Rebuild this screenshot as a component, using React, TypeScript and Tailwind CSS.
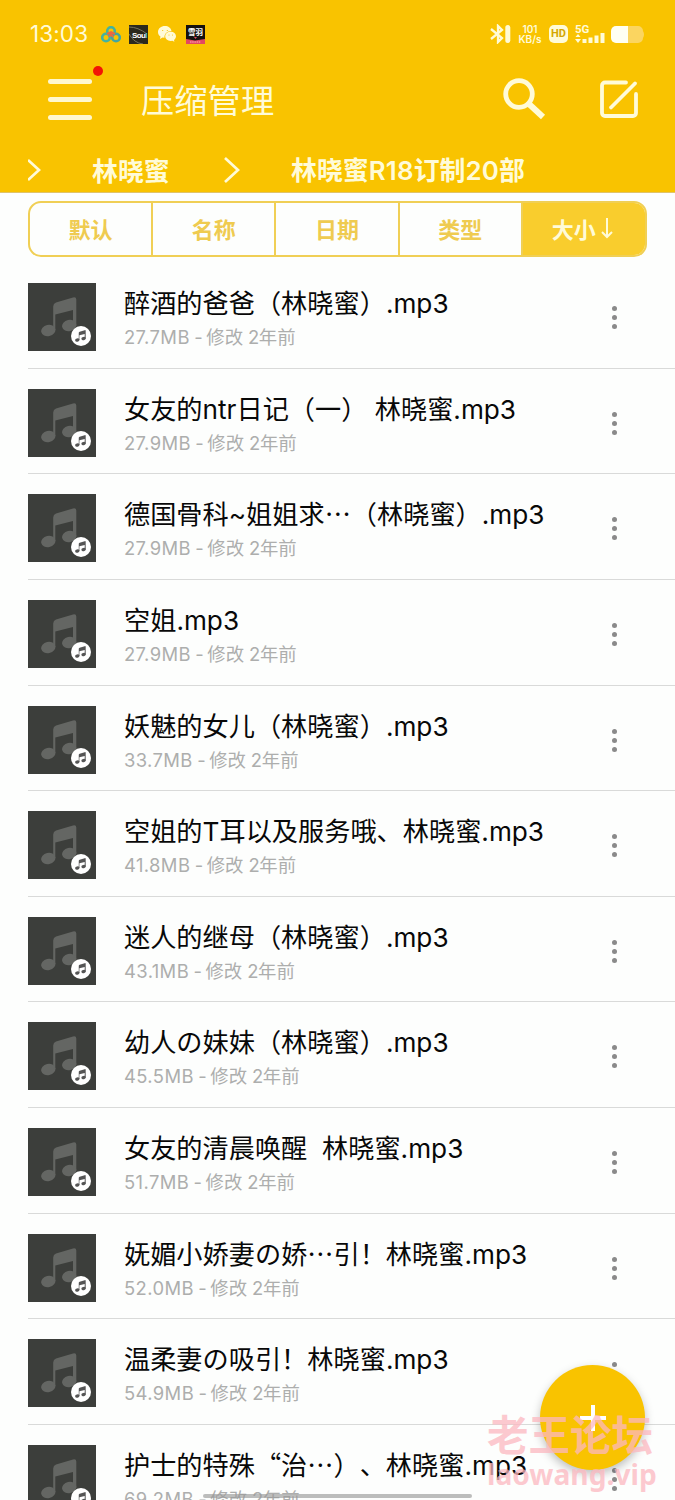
import React from "react";

const CJK = "font-['Noto_Sans_CJK_SC',sans-serif]";
const LATIN = "font-['Inter','Noto_Sans_CJK_SC',sans-serif]";

type Track = { title: string; size: string };

const tracks: Track[] = [
  { title: "醉酒的爸爸（林晓蜜）.mp3", size: "27.7MB" },
  { title: "女友的ntr日记（一） 林晓蜜.mp3", size: "27.9MB" },
  { title: "德国骨科~姐姐求…（林晓蜜）.mp3", size: "27.9MB" },
  { title: "空姐.mp3", size: "27.9MB" },
  { title: "妖魅的女儿（林晓蜜）.mp3", size: "33.7MB" },
  { title: "空姐的T耳以及服务哦、林晓蜜.mp3", size: "41.8MB" },
  { title: "迷人的继母（林晓蜜）.mp3", size: "43.1MB" },
  { title: "幼人の妹妹（林晓蜜）.mp3", size: "45.5MB" },
  { title: "女友的清晨唤醒  林晓蜜.mp3", size: "51.7MB" },
  { title: "妩媚小娇妻の娇…引！林晓蜜.mp3", size: "52.0MB" },
  { title: "温柔妻の吸引！林晓蜜.mp3", size: "54.9MB" },
  { title: "护士的特殊“治…）、林晓蜜.mp3", size: "69.2MB" },
];

const tabs = ["默认", "名称", "日期", "类型"];

function Mixed({ text }: { text: string }) {
  return (
    <>
      {text.split(/([\x20-\x7e]+)/).map((part, i) => (
        <span key={i} className={i % 2 ? LATIN : CJK}>{part}</span>
      ))}
    </>
  );
}

function Note({ className }: { className: string }) {
  return (
    <svg viewBox="0 0 36 40" className={className} fill="currentColor">
      <path d="M12.2 9.5Q12.3 6.5 15 5.500L32 .500Q35.300-.200 35.300 2.500V29H32V13L14.300 17.500V33H12.200Z" />
      <ellipse cx="7.300" cy="33.500" rx="7.200" ry="5.600" transform="rotate(-12 7.300 33.500)" />
      <ellipse cx="28.200" cy="28.500" rx="7.200" ry="5.600" transform="rotate(-12 28.200 28.500)" />
    </svg>
  );
}

function Row({ title, size }: Track) {
  return (
    <li className="flex h-[105.65px] shrink-0 items-start border-b border-[#d9dad9] pt-[20px]">
      <div className="relative size-[68px] shrink-0 bg-[#3c3e3b] text-[#646663]">
        <Note className="absolute left-[13px] top-[14px] h-[40px] w-[36px]" />
        <div className="absolute left-[42.500px] top-[42.500px] flex size-5 items-center justify-center rounded-full bg-white text-[#555]">
          <Note className="h-3 w-[11px]" />
        </div>
      </div>
      <div className="ml-[28px] flex-1 whitespace-pre">
        <div className="h-[42px] text-[26.2px] leading-[39px] text-[#080808] [font-kerning:none] [text-spacing-trim:space-all]"><Mixed text={title} /></div>
        <div className={`${LATIN} -mt-[3px] text-[18.4px] leading-[28px] text-[#adaead]`}>
          <span className="tracking-[0.4px]">{size}</span>
          <span className="tracking-[-0.8px]"> - </span>
          <span className={CJK}>修改</span><span className="tracking-[-0.3px]"> 2</span><span className={CJK}>年前</span>
        </div>
      </div>
      <div className="mr-[58px] mt-[23px] flex flex-col gap-[4px]">
        <i className="size-[5px] rounded-full bg-[#8a8a8a]" />
        <i className="size-[5px] rounded-full bg-[#8a8a8a]" />
        <i className="size-[5px] rounded-full bg-[#8a8a8a]" />
      </div>
    </li>
  );
}

function StatusBar() {
  return (
    <div className="flex h-[68px] items-center pl-[30px] pr-[30px] text-[#fffbd8]">
      <span className={`${LATIN} w-[71px] text-[22.500px] tracking-[0.1px]`}>13:03</span>
      <svg className="h-[17px] w-[20px]" viewBox="0 0 20 17" fill="none" strokeWidth="2.600">
        <circle cx="10" cy="5" r="3.800" stroke="#43b3a0" />
        <circle cx="5" cy="11.500" r="3.800" stroke="#43b3a0" />
        <circle cx="15" cy="11.500" r="3.800" stroke="#43a6a0" />
        <path d="M6 8l4-2 4 2M8 11l2-3 2 3" stroke="#ee6840" strokeWidth="2" />
      </svg>
      <svg className="ml-2 size-[19px]" viewBox="0 0 19 19">
        <rect width="19" height="19" fill="#2b291d" />
        <path d="M0 2Q9 2 18 9M0 9Q5 18 14 19" stroke="#77735c" fill="none" />
        <text x="3" y="12.800" fontSize="8" letterSpacing="-.6" fontWeight="bold" fontFamily="Liberation Sans" fill="#fff">Sou<tspan fill="#4cc">l</tspan></text>
      </svg>
      <svg className="ml-[10px] h-[17px] w-[18px]" viewBox="0 0 18 17" fill="currentColor">
        <path d="M7 0C3 0 0 2.600 0 6c0 2 1 3.500 2.500 4.500L2 13l2.500-1.500 2 .3C6 8 9 5 13.500 5 13 2 10.300 0 7 0Z" />
        <path d="M12.700 5.700c-3.200 0-5.500 2-5.500 4.600s2.300 4.600 5.500 4.600l1.700-.2 2 1.100-.4-1.800c1.200-.9 2-2.200 2-3.700 0-2.600-2.300-4.600-5.300-4.600Z" />
        <g fill="#f6c100"><circle cx="4.700" cy="4.500" r=".6" /><circle cx="9.300" cy="4.500" r=".6" /><circle cx="11" cy="9" r=".5" /><circle cx="14.500" cy="9" r=".5" /></g>
      </svg>
      <svg className="ml-[10px] size-[19px]" viewBox="0 0 19 19">
        <rect width="19" height="19" fill="#15100e" />
        <path d="M0 14l9 1.500 10-1.500v5H0Z" fill="#e34862" />
        <text x="2" y="10" fontSize="7.500" fontWeight="bold" fontFamily="Noto Sans CJK SC" fill="#fff">雪羽</text>
        <path d="M8 12h3l-1.500 2Z" fill="#e34862" /><path d="M4 17h11" stroke="#ffb4bc" strokeDasharray="1.500 .7" />
      </svg>
      <svg className="ml-auto h-[20px] w-[21px]" viewBox="0 0 21 20" fill="none" stroke="currentColor" strokeWidth="2.300">
        <path d="M1 5l11 9-4 4V2l4 4-11 9" /><path d="M17.800 3.500v13" strokeWidth="5" strokeLinecap="round" />
      </svg>
      <div className={`${LATIN} ml-[7px] flex w-[24px] flex-col items-center text-[10px] font-semibold leading-[10px]`}>
        <span>101</span><span>KB/s</span>
      </div>
      <div className="ml-[7px] flex h-[18px] w-[19px] items-center justify-center rounded-[5px] bg-[#fffbd8] font-['Roboto',sans-serif] text-[11px] font-bold text-[#d4a700]">HD</div>
      <svg className="ml-[7px] h-[20px] w-[30px] overflow-visible" viewBox="0 0 30 20" fill="currentColor">
        <text x="0" y="9" fontSize="11.500" fontWeight="bold" fontFamily="Roboto">5G</text>
        <path d="M0.500 13l2.500-3 2.500 3ZM0 15h6l-3 4ZM7.500 15h4v4h-4ZM13.500 13.500h4v5.500h-4ZM19.500 11.500h4v7.500h-4ZM25.500 9h4v10h-4Z" />
      </svg>
      <svg className="ml-[6px] h-[17px] w-[34px]" viewBox="0 0 34 17">
        <path d="M5 0H27a5 5 0 015 5q2 3.500 0 7a5 5 0 01-5 5H5Z" fill="#fbd560" />
        <path d="M5 0H17V17H5a5 5 0 01-5-5V5a5 5 0 015-5Z" fill="#fffff2" />
      </svg>
    </div>
  );
}

export default function App() {
  return (
    <main lang="zh-CN" className={`relative flex h-[1500px] w-[675px] flex-col overflow-hidden bg-[#fdfefd] ${CJK}`}>
      <header className="h-[193px] shrink-0 border-b border-[#dfc36a] bg-[#f9c300] text-[#fffbd8]">
        <StatusBar />
        <div className="flex h-[62px] items-center pl-[48px] pr-[36px]">
          <div className="relative flex w-[44px] flex-col gap-[13px]">
            <i className="h-[5px] rounded-full bg-[#fff8cf]" /><i className="h-[5px] rounded-full bg-[#fff8cf]" /><i className="h-[5px] rounded-full bg-[#fff8cf]" />
            <i className="absolute -top-[13px] left-[45px] size-[10px] rounded-full bg-[#f21505]" />
          </div>
          <h1 className="ml-[49px] text-[33.300px] leading-[40px]">压缩管理</h1>
          <svg className="ml-auto h-[42px] w-[43px]" viewBox="0 0 43 42" fill="none" stroke="currentColor" strokeWidth="4.800">
            <circle cx="16" cy="16" r="13.300" /><path d="M26 26L40 39" strokeWidth="6" />
          </svg>
          <svg className="ml-[53px] h-[40px] w-[40px]" viewBox="0 0 40 40" fill="none" stroke="currentColor" strokeWidth="3.800" strokeLinecap="round">
            <path d="M27 3.500H6a3 3 0 00-3 3V34a3 3 0 003 3H34a3 3 0 003-3V15" /><path d="M12 28.500L36 4.500" />
          </svg>
        </div>
        <nav className="mt-[6px] flex h-[68px] items-center pl-[28px] text-[25.900px] font-semibold leading-none">
          <svg className="h-[22px] w-[13px]" viewBox="0 0 13 22" fill="none" stroke="currentColor" strokeWidth="2.700"><path d="M0 1l11 10L0 21" /></svg>
          <span className="ml-[51px] w-[77px] whitespace-nowrap">林晓蜜</span>
          <svg className="ml-[55px] h-[26px] w-[16px]" viewBox="0 0 16 26" fill="none" stroke="currentColor" strokeWidth="2.700"><path d="M1 1l13 12L1 25" /></svg>
          <span className="ml-[51px] whitespace-nowrap">林晓蜜<span className={`${LATIN} tracking-[0.2px]`}>R18</span>订制<span className={`${LATIN} tracking-[0.2px]`}>20</span>部</span>
        </nav>
      </header>

      <div className="mx-[28px] mt-[8px] flex h-[56px] shrink-0 overflow-hidden rounded-[13px] border-2 border-[#f0cf55] text-[22px] font-semibold text-[#efcb50]">
        {tabs.map((t) => (
          <div key={t} className="flex w-[123.200px] items-center justify-center border-r-2 border-[#f0cf55] pb-[2px]">{t}</div>
        ))}
        <div className="flex flex-1 items-center justify-center bg-[#f9cd2d] pb-[2px] pr-[3px] text-[#fffbd8]">
          大小
          <svg className="ml-[5px] h-[22px] w-[12px]" viewBox="0 0 12 22" fill="none" stroke="currentColor" strokeWidth="2"><path d="M6 1v19M1 15l5 5 5-5" /></svg>
        </div>
      </div>

      <ul className="ml-[28px] mt-[6px] flex flex-col">
        {tracks.map((t) => <Row key={t.title} {...t} />)}
      </ul>

      <div className="absolute left-[540px] top-[1365px] flex size-[105px] items-center justify-center rounded-full bg-[#f9c300] shadow-[0_4px_10px_rgba(0,0,0,0.25)]">
        <svg className="size-[26px]" viewBox="0 0 26 26" stroke="#fff" strokeWidth="4"><path d="M13 0v26M0 13h26" /></svg>
      </div>
      <div className="absolute left-[203px] top-[1494px] h-[4px] w-[269px] rounded-full bg-[#999]/65" />
      <div className="absolute left-[487px] top-[1409px] whitespace-nowrap font-bold text-[#fcb8c0]/75">
        <div className="text-[41.500px] leading-[48px]">老王论坛</div>
        <div className="font-['Noto_Sans',sans-serif] text-[28.200px] leading-[34px]">laowang.vip</div>
      </div>
    </main>
  );
}
